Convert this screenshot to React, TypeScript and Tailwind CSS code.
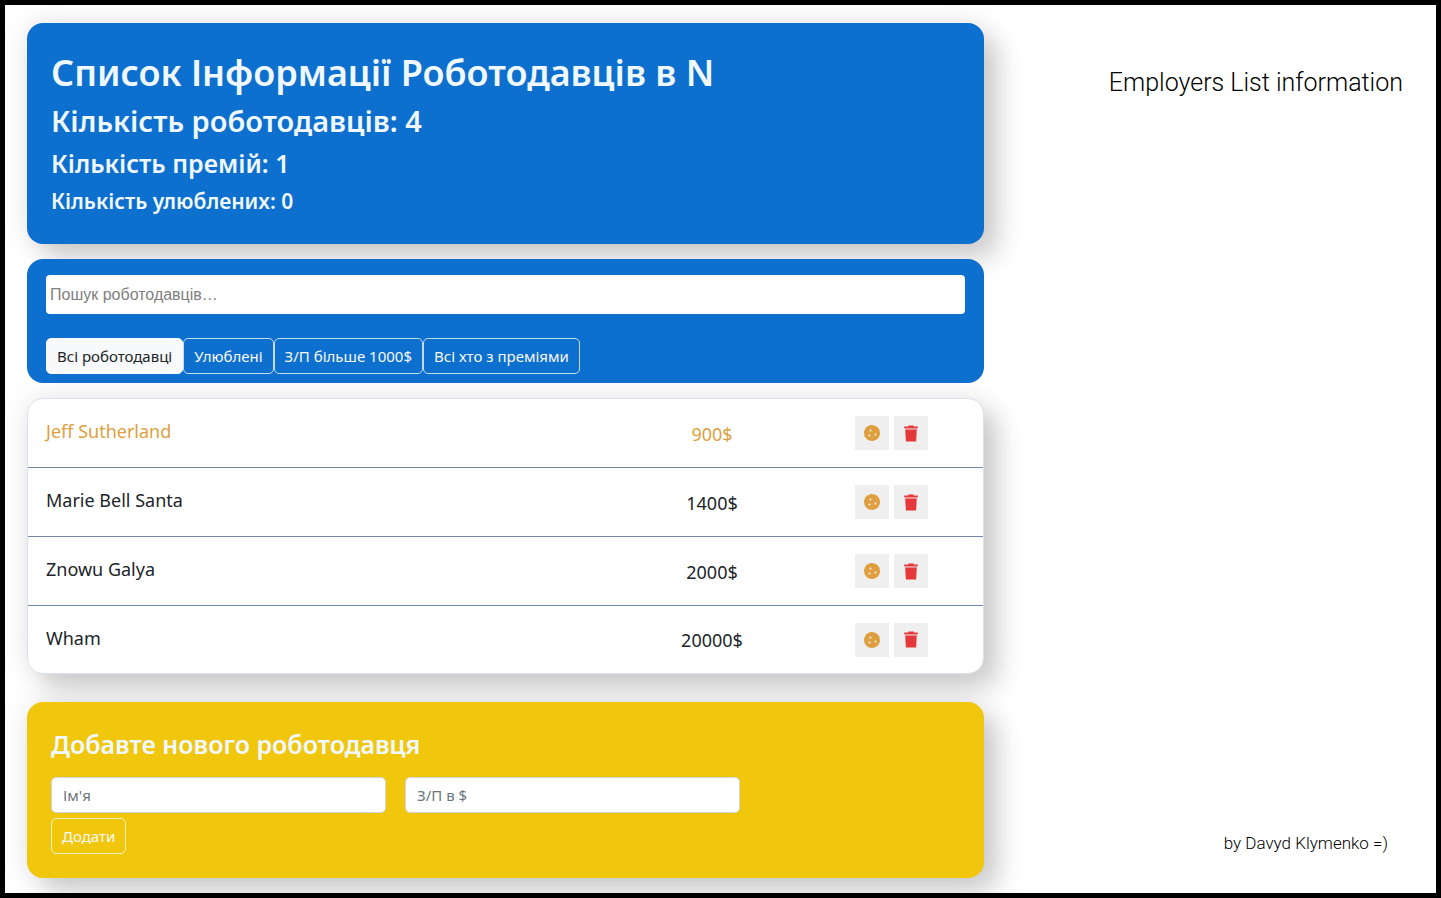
import { useState } from "react";
import { FaCookie } from "react-icons/fa";

type Employer = { id: number; name: string; salary: string; bonus: boolean };

const employers: Employer[] = [
  { id: 1, name: "Jeff Sutherland", salary: "900$", bonus: true },
  { id: 2, name: "Marie Bell Santa", salary: "1400$", bonus: false },
  { id: 3, name: "Znowu Galya", salary: "2000$", bonus: false },
  { id: 4, name: "Wham", salary: "20000$", bonus: false },
];

const filters = ["Всі роботодавці", "Улюблені", "З/П більше 1000$", "Всі хто з преміями"];

const raised = "rounded-2xl shadow-[15px_15px_26px_rgba(0,0,0,0.17),0_0_30px_rgba(0,0,0,0.1)]";

function TrashIcon() {
  return (
    <svg viewBox="0 0 16 17" className="h-[17px] w-4" fill="currentColor" aria-hidden="true">
      <path d="M5.3 0.6h5.4v0.9h4.1v1.7H1.2V1.5h4.1z" />
      <path d="M1.6 3.2h12.8v1.2H1.6z" opacity="0.35" />
      <path d="M2.2 4.4h11.6l-0.7 12.2H2.9z" />
    </svg>
  );
}

function Summary() {
  return (
    <header className={`${raised} bg-[#0d6fce] px-6 pt-[25px] pb-6 font-semibold text-[#f0f8ff]`}>
      <h1 className="text-[36px] leading-[50px]">Список Інформації Роботодавців в N</h1>
      <h2 className="text-[29px] leading-[46px]">Кількість роботодавців: 4</h2>
      <h3 className="text-[25px] leading-[38px]">Кількість премій: 1</h3>
      <h4 className="text-[21px] leading-[38px]">Кількість улюблених: 0</h4>
    </header>
  );
}

function SearchPanel() {
  const [active, setActive] = useState(0);
  return (
    <section className="relative z-10 mt-[15px] rounded-2xl bg-[#0d6fce] px-[19px] pt-4 pb-[9px]">
      <input
        type="text"
        aria-label="Пошук роботодавців"
        placeholder="Пошук роботодавців…"
        className="block h-[39px] w-full rounded-sm bg-white px-1 font-['Liberation_Sans',sans-serif] text-base placeholder:text-[#808080]"
      />
      <div className="mt-6 flex flex-wrap">
        {filters.map((label, i) => (
          <button
            key={label}
            type="button"
            onClick={() => setActive(i)}
            className={`h-9 rounded-[5px] border px-[10px] text-[15px] ${
              i === active
                ? "border-[#f8f9fa] bg-[#f8f9fa] text-[#212529]"
                : "border-[#c4dcf3] text-[#f8f9fa]"
            }`}
          >
            {label}
          </button>
        ))}
      </div>
    </section>
  );
}

function EmployerRow({ employer }: { employer: Employer }) {
  const tone = employer.bonus ? "text-[#e09f3e]" : "text-[#212529]";
  return (
    <li className="flex h-[69px] items-center border-b border-[#7088aa] pr-[55px] pl-[18px] last:h-[67px] last:border-b-0">
      <span className={`flex-1 pb-1 text-lg ${tone}`}>{employer.name}</span>
      <input
        type="text"
        aria-label={`Зарплата ${employer.name}`}
        defaultValue={employer.salary}
        className={`w-[140px] bg-transparent pt-px text-center text-lg ${tone}`}
      />
      <div className="ml-[73px] flex gap-[5px]">
        <button
          type="button"
          aria-label="Премія"
          className="flex size-[34px] items-center justify-center bg-[#efefef] text-[#e09f3e]"
        >
          <FaCookie className="size-4" />
        </button>
        <button
          type="button"
          aria-label="Видалити"
          className="flex size-[34px] items-center justify-center bg-[#efefef] text-[#e5383b]"
        >
          <TrashIcon />
        </button>
      </div>
    </li>
  );
}

function AddForm() {
  const field =
    "h-9 w-[335px] rounded-[5px] border border-[#ced4da] bg-white px-[11px] text-[15px] placeholder:text-[#6c757d]";
  return (
    <section className={`${raised} relative mt-7 bg-[#f1c70e] px-6 pt-6 pb-6`}>
      <h3 className="text-[25px] leading-9 font-semibold text-[#f0f8ff]">Добавте нового роботодавця</h3>
      <form className="mt-[15px]" onSubmit={(e) => e.preventDefault()}>
        <div className="flex flex-wrap gap-[19px]">
          <input type="text" aria-label="Ім'я" placeholder="Ім'я" className={field} />
          <input type="text" aria-label="З/П в $" placeholder="З/П в $" className={field} />
        </div>
        <button
          type="submit"
          className="mt-[5px] block h-9 rounded-[5px] border border-[#f8efc0] px-[10px] text-[15px] text-[#f8f9fa]"
        >
          Додати
        </button>
      </form>
    </section>
  );
}

export default function App() {
  return (
    <div className="flex min-h-screen overflow-hidden border-5 border-black bg-white font-['Noto_Sans','Open_Sans',sans-serif]">
      <main className="flex-1 pt-[18px] pb-[14px] pl-[22px]">
        <Summary />
        <SearchPanel />
        <ul className={`${raised} relative mt-[15px] border border-[#dbe4ee] bg-white`}>
          {employers.map((e) => (
            <EmployerRow key={e.id} employer={e} />
          ))}
        </ul>
        <AddForm />
      </main>
      <aside className="flex w-[452px] flex-col items-end justify-between pt-[61px] pb-[38px] font-['Roboto',sans-serif] font-light text-black">
        <p className="pr-[33px] text-[25px] leading-[34px]">Employers List information</p>
        <p className="pr-12 text-[17px] leading-6">by Davyd Klymenko =)</p>
      </aside>
    </div>
  );
}
